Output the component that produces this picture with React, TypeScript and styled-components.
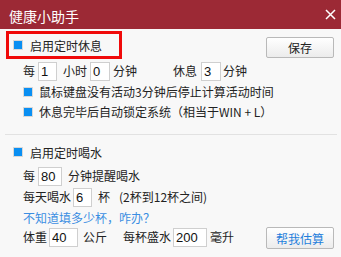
import React from "react";
import styled, { createGlobalStyle } from "styled-components";

const GlobalStyle = createGlobalStyle`
  html, body {
    margin: 0;
    padding: 0;
    background: #f8f8f8;
  }
  body {
    font-family: "Noto Sans CJK SC", "Liberation Sans", sans-serif;
    font-size: 12px;
    color: #222;
  }
`;

const Window = styled.div`
  width: 341px;
  height: 257px;
  background: #f8f8f8;
  display: flex;
  flex-direction: column;
  overflow: hidden;
`;

const TitleBar = styled.div`
  height: 29px;
  flex: none;
  background: #9c2935;
  color: #fff;
  display: flex;
  align-items: center;
  justify-content: space-between;
  padding: 2px 5px 0 9px;
  box-sizing: border-box;
  font-size: 14px;
`;

const CloseButton = styled.div`
  width: 12px;
  height: 12px;
  display: flex;
  align-items: center;
  justify-content: center;
  margin-top: -3px;
`;

const HeaderRow = styled.div`
  display: flex;
  align-items: center;
  justify-content: space-between;
  padding: 0 7px 0 6px;
  margin-top: 2px;
  height: 28px;
`;

const Highlight = styled.div`
  width: 116px;
  height: 28px;
  box-sizing: border-box;
  border: 3px solid #f00a0a;
  display: flex;
  align-items: center;
  padding-left: 4px;
  gap: 7px;
`;

const SectionHead = styled.div<{ $mt?: number }>`
  display: flex;
  align-items: center;
  height: 20px;
  padding-left: 13px;
  gap: 7px;
  margin-top: ${(p) => p.$mt ?? 0}px;
`;

const Check = styled.span`
  width: 10px;
  height: 10px;
  box-sizing: border-box;
  border: 1px solid #d8d8d8;
  background: #fff;
  display: inline-flex;
  flex: none;
  &::after {
    content: "";
    flex: 1;
    background: #0a8ff2;
  }
`;

const Row = styled.div<{ $mt?: number }>`
  display: flex;
  align-items: center;
  height: 20px;
  padding-left: 23px;
  margin-top: ${(p) => p.$mt ?? 0}px;
  white-space: nowrap;
`;

const CheckRow = styled(Row)`
  gap: 6px;
`;

const Text = styled.span<{ $ml?: number }>`
  margin-left: ${(p) => p.$ml ?? 0}px;
  line-height: 20px;
`;

const Field = styled.input<{ $w: number; $ml?: number }>`
  width: ${(p) => p.$w}px;
  height: 19px;
  box-sizing: border-box;
  margin: 0 0 0 ${(p) => p.$ml ?? 0}px;
  padding: 0 0 0 2px;
  border: 1px solid #cfcfcf;
  background: #fff;
  font-family: "Liberation Sans", sans-serif;
  font-size: 13px;
  color: #111;
  outline: none;
`;

const Link = styled.a`
  color: #3b8ee2;
  text-decoration: none;
  cursor: pointer;
`;

const Button = styled.button<{ $blue?: boolean; $h?: number; $mt?: number }>`
  width: 68px;
  height: ${(p) => p.$h ?? 21}px;
  box-sizing: border-box;
  border: 1px solid #b9b9b9;
  border-radius: 2px;
  background: linear-gradient(#ffffff, #ececec);
  font-family: "Noto Sans CJK SC", sans-serif;
  font-size: 12px;
  color: ${(p) => (p.$blue ? "#1f7fdc" : "#222")};
  padding: 0;
  margin: ${(p) => p.$mt ?? 0}px 0 0 0;
  line-height: 19px;
`;

const Divider = styled.div`
  height: 1px;
  background: #e2e2e2;
  margin: 12px 4px 0 5px;
`;

const Spacer = styled.div`
  flex: 1;
`;

const BottomRow = styled(Row)`
  padding-right: 7px;
`;

export default function App() {
  return (
    <Window>
      <GlobalStyle />
      <TitleBar>
        <span>健康小助手</span>
        <CloseButton>
          <svg width="11" height="11" viewBox="0 0 11 11">
            <path d="M1 1L10 10M10 1L1 10" stroke="#fff" strokeWidth="1.5" />
          </svg>
        </CloseButton>
      </TitleBar>

      <HeaderRow>
        <Highlight>
          <Check />
          <span>启用定时休息</span>
        </Highlight>
        <Button $mt={4}>保存</Button>
      </HeaderRow>

      <Row $mt={2}>
        <Text>每</Text>
        <Field $w={19} $ml={3} defaultValue="1" />
        <Text $ml={6}>小时</Text>
        <Field $w={20} $ml={3} defaultValue="0" />
        <Text $ml={3}>分钟</Text>
        <Text $ml={36}>休息</Text>
        <Field $w={20} $ml={4} defaultValue="3" />
        <Text $ml={2}>分钟</Text>
      </Row>
      <CheckRow $mt={1}>
        <Check />
        <Text>鼠标键盘没有活动3分钟后停止计算活动时间</Text>
      </CheckRow>
      <CheckRow>
        <Check />
        <Text>休息完毕后自动锁定系统（相当于WIN + L）</Text>
      </CheckRow>

      <Divider />

      <SectionHead $mt={7}>
        <Check />
        <span>启用定时喝水</span>
      </SectionHead>

      <Row $mt={4}>
        <Text>每</Text>
        <Field $w={24} $ml={3} defaultValue="80" />
        <Text $ml={6}>分钟提醒喝水</Text>
      </Row>
      <Row $mt={1}>
        <Text>每天喝水</Text>
        <Field $w={19} $ml={2} defaultValue="6" />
        <Text $ml={6}>杯</Text>
        <Text $ml={9}>(2杯到12杯之间)</Text>
      </Row>
      <Row>
        <Link>不知道填多少杯，咋办？</Link>
      </Row>
      <BottomRow>
        <Text>体重</Text>
        <Field $w={29} $ml={2} defaultValue="40" />
        <Text $ml={5}>公斤</Text>
        <Text $ml={16}>每杯盛水</Text>
        <Field $w={34} $ml={2} defaultValue="200" />
        <Text $ml={3}>毫升</Text>
        <Spacer />
        <Button $blue $h={22} $mt={2}>帮我估算</Button>
      </BottomRow>
    </Window>
  );
}
